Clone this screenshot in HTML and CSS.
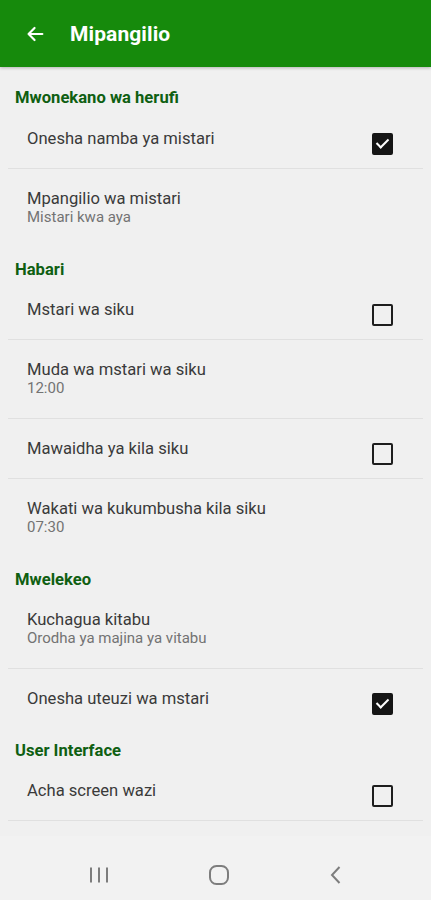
FILE: index.html
```html
<!DOCTYPE html>
<html lang="sw">
<head>
    <meta charset="UTF-8">
    <meta name="viewport" content="width=device-width, initial-scale=1.0">
    <title>Mipangilio</title>
    <link rel="stylesheet" href="styles.css">
</head>
<body>
    <div class="screen">
        <header class="app-bar">
            <svg class="back" width="22" height="22" viewBox="0 0 24 24">
                <path d="M20 12H5M11.5 5.5L5 12l6.5 6.5" fill="none" stroke="#fff" stroke-width="2.4" stroke-linecap="round" stroke-linejoin="round"/>
            </svg>
            <h1>Mipangilio</h1>
        </header>

        <div class="settings">
            <div class="category first">Mwonekano wa herufi</div>
            <div class="item divided">
                <div class="text"><div class="title">Onesha namba ya mistari</div></div>
                <span class="check on"></span>
            </div>
            <div class="item">
                <div class="text">
                    <div class="title">Mpangilio wa mistari</div>
                    <div class="summary">Mistari kwa aya</div>
                </div>
            </div>

            <div class="category">Habari</div>
            <div class="item divided">
                <div class="text"><div class="title">Mstari wa siku</div></div>
                <span class="check"></span>
            </div>
            <div class="item divided">
                <div class="text">
                    <div class="title">Muda wa mstari wa siku</div>
                    <div class="summary">12:00</div>
                </div>
            </div>
            <div class="item divided">
                <div class="text"><div class="title">Mawaidha ya kila siku</div></div>
                <span class="check"></span>
            </div>
            <div class="item">
                <div class="text">
                    <div class="title">Wakati wa kukumbusha kila siku</div>
                    <div class="summary">07:30</div>
                </div>
            </div>

            <div class="category">Mwelekeo</div>
            <div class="item divided">
                <div class="text">
                    <div class="title">Kuchagua kitabu</div>
                    <div class="summary">Orodha ya majina ya vitabu</div>
                </div>
            </div>
            <div class="item">
                <div class="text"><div class="title">Onesha uteuzi wa mstari</div></div>
                <span class="check on"></span>
            </div>

            <div class="category">User Interface</div>
            <div class="item divided">
                <div class="text"><div class="title">Acha screen wazi</div></div>
                <span class="check"></span>
            </div>
        </div>

        <nav class="nav-bar">
            <svg width="20" height="18" viewBox="0 0 20 18">
                <path d="M2 1.5v15M10 1.5v15M18 1.5v15" stroke="#7d7d7d" stroke-width="2"/>
            </svg>
            <svg width="22" height="22" viewBox="0 0 22 22">
                <rect x="2" y="2" width="18" height="18" rx="6.5" fill="none" stroke="#7d7d7d" stroke-width="2"/>
            </svg>
            <svg width="14" height="20" viewBox="0 0 14 20">
                <path d="M10.5 2L3 10l7.5 8" fill="none" stroke="#7d7d7d" stroke-width="2"/>
            </svg>
        </nav>
    </div>
</body>
</html>
```

FILE: styles.css
```css
* {
    margin: 0;
    padding: 0;
    box-sizing: border-box;
}

body {
    font-family: Roboto, 'Noto Sans', sans-serif;
    background: #f0f0f0;
    color: #333;
}

.screen {
    width: 431px;
    height: 900px;
    display: flex;
    flex-direction: column;
    overflow: hidden;
}

.app-bar {
    flex-shrink: 0;
    height: 67px;
    background: #168a0c;
    display: flex;
    align-items: center;
    padding-left: 24px;
    box-shadow: 0 1px 3px rgba(0, 0, 0, 0.25);
    position: relative;
    z-index: 1;
}

.app-bar .back {
    margin-right: 24px;
}

.app-bar h1 {
    color: #fff;
    font-size: 21px;
    font-weight: 700;
    letter-spacing: 0.1px;
}

.settings {
    flex: 1;
    min-height: 0;
    overflow: hidden;
}

.category {
    padding: 12px 15px 0;
    height: 32px;
    line-height: 20px;
    font-size: 16.6px;
    font-weight: 700;
    color: #0f5f12;
}

.category.first {
    padding-top: 21px;
    height: 42px;
}

.item {
    display: flex;
    align-items: flex-start;
    justify-content: space-between;
    margin: 0 8px;
    padding: 20px 30px 20px 19px;
    border-bottom: 1px solid transparent;
}

.item.divided {
    border-bottom-color: #e0e0e0;
}

.title {
    font-size: 16.6px;
    line-height: 19px;
    color: #3a3a3a;
}

.summary {
    font-size: 15px;
    line-height: 19px;
    color: #737373;
}

.check {
    flex-shrink: 0;
    width: 21px;
    height: 22px;
    margin: 4px 0 -7px;
    border: 2.5px solid #1e1e1e;
    border-radius: 2px;
    position: relative;
}

.check.on {
    background: #151515;
    border-color: #151515;
}

.check.on::after {
    content: '';
    position: absolute;
    left: 5px;
    top: 1px;
    width: 5px;
    height: 10px;
    border: solid #fff;
    border-width: 0 2px 2px 0;
    transform: rotate(45deg);
}

.nav-bar {
    flex-shrink: 0;
    height: 64px;
    background: #f2f2f2;
    display: flex;
    align-items: center;
    justify-content: center;
    gap: 99px;
    padding-top: 14px;
}
```
